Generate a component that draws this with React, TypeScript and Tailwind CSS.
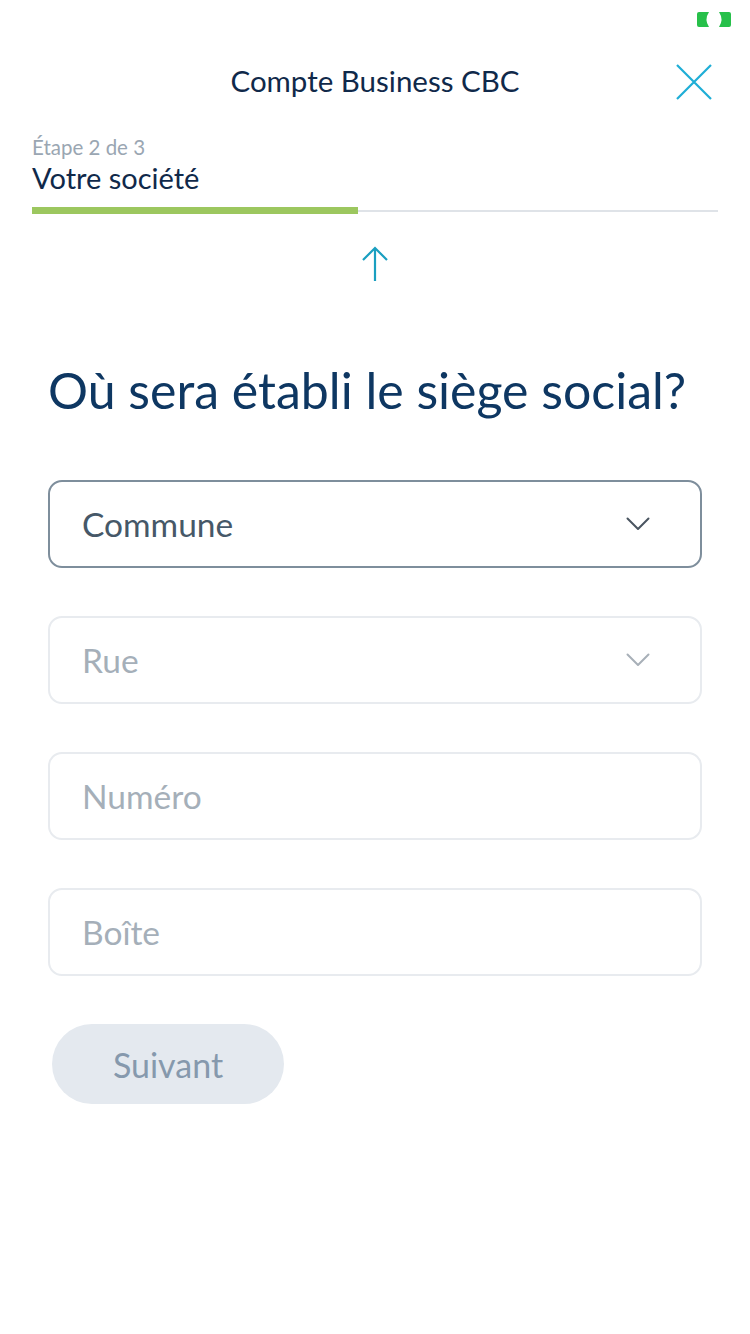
import React from "react";

const Chevron = ({ color }: { color: string }) => (
  <svg width="24" height="14" viewBox="0 0 24 14" fill="none">
    <path d="M1.5 1.5 L12 12 L22.5 1.5" stroke={color} strokeWidth="2" strokeLinecap="round" strokeLinejoin="round" />
  </svg>
);

export default function App() {
  return (
    <div className="w-[750px] h-[1334px] bg-white relative overflow-hidden" style={{ fontFamily: "Lato, 'Open Sans', sans-serif" }}>
      {/* status indicator */}
      <div className="absolute right-[19px] top-[12px]">
        <svg width="34" height="15" viewBox="0 0 34 15">
          <path d="M2 0 H12 Q7 7.5 12 15 H2 Q0 15 0 13 V2 Q0 0 2 0 Z" fill="#27c04a" />
          <path d="M32 0 H22 Q27 7.5 22 15 H32 Q34 15 34 13 V2 Q34 0 32 0 Z" fill="#27c04a" />
        </svg>
      </div>

      {/* header */}
      <div className="relative h-[130px] flex items-start justify-center pt-[63px]">
        <div className="text-[29.5px] leading-[36px] text-[#10294a]">Compte Business CBC</div>
        <div className="absolute right-[38px] top-[64px]">
          <svg width="36" height="36" viewBox="0 0 36 36" fill="none">
            <path d="M1 1 L35 35 M35 1 L1 35" stroke="#1eaed6" strokeWidth="2.2" />
          </svg>
        </div>
      </div>

      {/* step */}
      <div className="px-[32px]">
        <div className="text-[20.5px] leading-[24px] text-[#9aa6b2] mt-[5px]">Étape 2 de 3</div>
        <div className="text-[29px] leading-[34px] text-[#10294a] mt-[2px]">Votre société</div>
        <div className="mt-[12px] flex items-center w-[686px]">
          <div className="h-[7px] w-[326px] bg-[#9cc75f]" />
          <div className="h-[2px] flex-1 bg-[#dfe3e8]" />
        </div>
      </div>

      {/* arrow */}
      <div className="flex justify-center mt-[32px]">
        <svg width="28" height="36" viewBox="0 0 28 36" fill="none">
          <path d="M14 35 V2 M2 14 L14 2 L26 14" stroke="#1a9fc0" strokeWidth="2.2" />
        </svg>
      </div>

      {/* question */}
      <div className="px-[48px] mt-[80px]">
        <h1 className="text-[50px] leading-[56px] text-[#0e3762] whitespace-nowrap">Où sera établi le siège social?</h1>
      </div>

      {/* form */}
      <div className="px-[48px] mt-[62px] flex flex-col gap-[48px]">
        <div className="h-[88px] rounded-[14px] border-2 border-[#7e8e9c] flex items-center justify-between pl-[32px] pr-[50px]">
          <span className="text-[33.5px] text-[#465868]">Commune</span>
          <Chevron color="#4a5560" />
        </div>
        <div className="h-[88px] rounded-[14px] border-2 border-[#e8ebef] flex items-center justify-between pl-[32px] pr-[50px]">
          <span className="text-[33.5px] text-[#a5afb9]">Rue</span>
          <Chevron color="#a8b0b8" />
        </div>
        <div className="h-[88px] rounded-[14px] border-2 border-[#e8ebef] flex items-center pl-[32px]">
          <span className="text-[33.5px] text-[#a5afb9]">Numéro</span>
        </div>
        <div className="h-[88px] rounded-[14px] border-2 border-[#e8ebef] flex items-center pl-[32px]">
          <span className="text-[33.5px] text-[#a5afb9]">Boîte</span>
        </div>
      </div>

      <div className="px-[52px] mt-[48px]">
        <div className="w-[232px] h-[80px] rounded-full bg-[#e4e9ef] flex items-center justify-center">
          <span className="text-[34px] text-[#8699ad]">Suivant</span>
        </div>
      </div>
    </div>
  );
}
